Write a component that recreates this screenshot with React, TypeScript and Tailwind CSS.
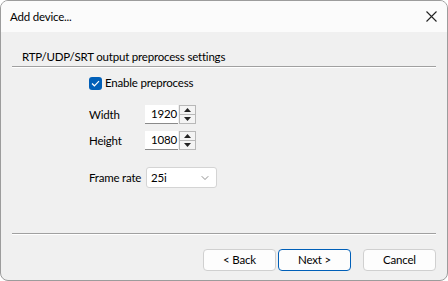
import { ChevronDown } from 'lucide-react';

const font = { fontFamily: 'Lato, "Segoe UI", sans-serif' };

function Spin({ value }: { value: string }) {
  return (
    <div className="flex h-[19px]">
      <div className="w-[33px] h-full bg-white border-b border-[#8a8a8a] flex items-center pl-[6px] text-black">
        {value}
      </div>
      <div className="ml-[1px] w-[17px] h-full border border-[#b8b8b8] bg-[#f4f4f4] flex flex-col">
        <div className="flex-1 flex items-center justify-center border-b border-[#b8b8b8]">
          <svg width="7" height="4" viewBox="0 0 7 4"><path d="M0 4 L3.5 0 L7 4 Z" fill="#222" /></svg>
        </div>
        <div className="flex-1 flex items-center justify-center">
          <svg width="7" height="4" viewBox="0 0 7 4"><path d="M0 0 L3.5 4 L7 0 Z" fill="#222" /></svg>
        </div>
      </div>
    </div>
  );
}

function Btn({ label, primary }: { label: string; primary?: boolean }) {
  return (
    <button
      className={
        'w-[73px] h-[22px] rounded-[4px] bg-[#fdfdfd] text-black flex items-center justify-center ' +
        (primary ? 'border border-[#005fb8]' : 'border border-[#d0d0d0]')
      }
    >
      {label}
    </button>
  );
}

export default function App() {
  return (
    <div
      className="w-[448px] h-[281px] border border-[#9c9c9c] rounded-[8px] overflow-hidden bg-[#f0f0f0] flex flex-col text-[11.5px] tracking-[-0.2px] text-black"
      style={font}
    >
      <div className="h-[31px] bg-[#fbfbfb] flex items-center justify-between pl-[9px] pr-[10px] shrink-0">
        <span>Add device...</span>
        <svg width="11" height="11" viewBox="0 0 11 11">
          <path d="M0.5 0.5 L10.5 10.5 M10.5 0.5 L0.5 10.5" stroke="#222" strokeWidth="1.1" />
        </svg>
      </div>

      <div className="flex-1 flex flex-col px-[11px]">
        <div className="pt-[17px] pl-[10px] leading-[16px] whitespace-nowrap">
          RTP/UDP/SRT output preprocess settings
        </div>
        <div className="mt-[1px] h-[1px] bg-[#a0a0a0]" />
        <div className="h-[1px] bg-white" />

        <div className="pl-[77px] flex flex-col">
          <label className="mt-[8px] flex items-center gap-[2px] h-[14px]">
            <span className="w-[13px] h-[13px] rounded-[3px] bg-[#005fb8] flex items-center justify-center">
              <svg width="9" height="7" viewBox="0 0 9 7">
                <path d="M1 3.5 L3.4 5.8 L8 1.2" stroke="white" strokeWidth="1.2" fill="none" />
              </svg>
            </span>
            <span className="ml-[1px] whitespace-nowrap">Enable preprocess</span>
          </label>

          <div className="mt-[15px] flex items-center h-[19px]">
            <span className="w-[56px] shrink-0">Width</span>
            <Spin value="1920" />
          </div>
          <div className="mt-[7px] flex items-center h-[19px]">
            <span className="w-[56px] shrink-0">Height</span>
            <Spin value="1080" />
          </div>

          <div className="mt-[17px] flex items-center h-[21px]">
            <span className="w-[57px] shrink-0 whitespace-nowrap">Frame rate</span>
            <div className="w-[71px] h-[21px] bg-white border border-[#d4d4d4] rounded-[3px] flex items-center justify-between pl-[4px] pr-[5px]">
              <span>25i</span>
              <ChevronDown size={12} strokeWidth={1.3} color="#555" />
            </div>
          </div>
        </div>

        <div className="mt-[45px] h-[1px] bg-[#a0a0a0]" />
        <div className="h-[1px] bg-white" />

        <div className="mt-[14px] flex justify-end">
          <div className="flex gap-[2px] mr-[12px]">
            <Btn label="< Back" />
            <Btn label="Next >" primary />
          </div>
          <Btn label="Cancel" />
        </div>
      </div>
    </div>
  );
}
